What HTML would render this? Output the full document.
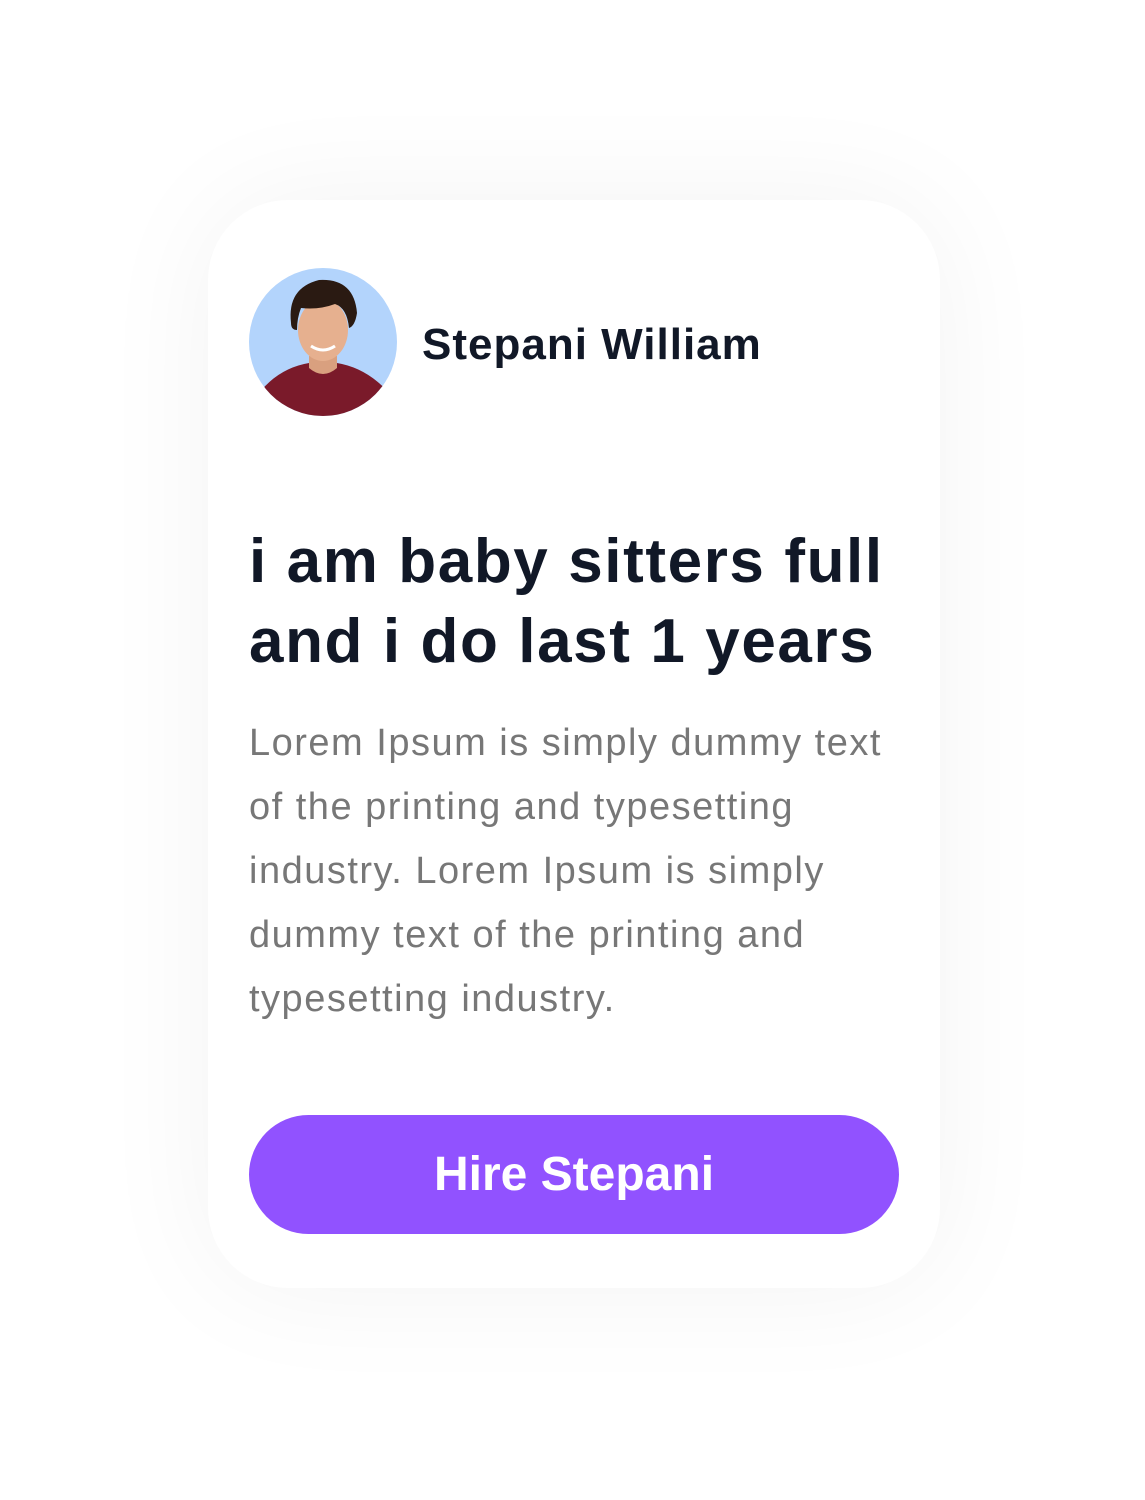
<!DOCTYPE html>
<html><head><style>
html,body{margin:0;padding:0;background:#fff;width:1145px;height:1500px;overflow:hidden;font-family:"Liberation Sans",sans-serif}
.card{position:absolute;left:208px;top:200px;width:732px;height:1088px;background:#fff;border-radius:80px;box-shadow:0 0 120px rgba(0,0,0,0.05)}
.av{position:absolute;left:249px;top:268px;width:148px;height:148px;border-radius:50%;overflow:hidden;background:#b3d4fc}
.name{position:absolute;left:422px;top:320px;font-size:44px;font-weight:bold;color:#111827;letter-spacing:1px;white-space:nowrap}
h1{position:absolute;left:249px;top:522px;margin:0;font-size:62px;line-height:80px;font-weight:bold;color:#111827;letter-spacing:1.6px;white-space:nowrap}
p{position:absolute;left:249px;top:711px;margin:0;font-size:38px;line-height:64px;color:#777;letter-spacing:1.5px;white-space:nowrap}
.btn{position:absolute;left:249px;top:1115px;width:650px;height:119px;border-radius:60px;background:#9152ff;color:#fff;font-size:48px;font-weight:bold;text-align:center;line-height:119px}
</style></head><body>
<div class="card"></div>
<div class="av"><svg width="148" height="148" viewBox="0 0 148 148">
<path d="M10 125 Q30 100 60 95 L88 95 Q118 100 140 125 L148 148 L0 148Z" fill="#7a1a2a"/>
<path d="M60 88 L88 88 L88 100 Q74 112 60 100Z" fill="#d9a07f"/>
<ellipse cx="74" cy="62" rx="25" ry="31" fill="#e6b08f"/>
<path d="M42 55 Q38 20 70 12 Q105 10 108 45 Q106 58 100 60 Q98 40 86 36 Q70 42 52 40 Q48 50 48 62 Q42 62 42 55Z" fill="#2a1a12"/>
<path d="M62 78 Q74 86 86 78" stroke="#fff" stroke-width="3" fill="none"/>
</svg></div>
<div class="name">Stepani William</div>
<h1>i am baby sitters full<br>and i do last 1 years</h1>
<p>Lorem Ipsum is simply dummy text<br>of the printing and typesetting<br>industry. Lorem Ipsum is simply<br>dummy text of the printing and<br>typesetting industry.</p>
<div class="btn">Hire Stepani</div>
</body></html>
